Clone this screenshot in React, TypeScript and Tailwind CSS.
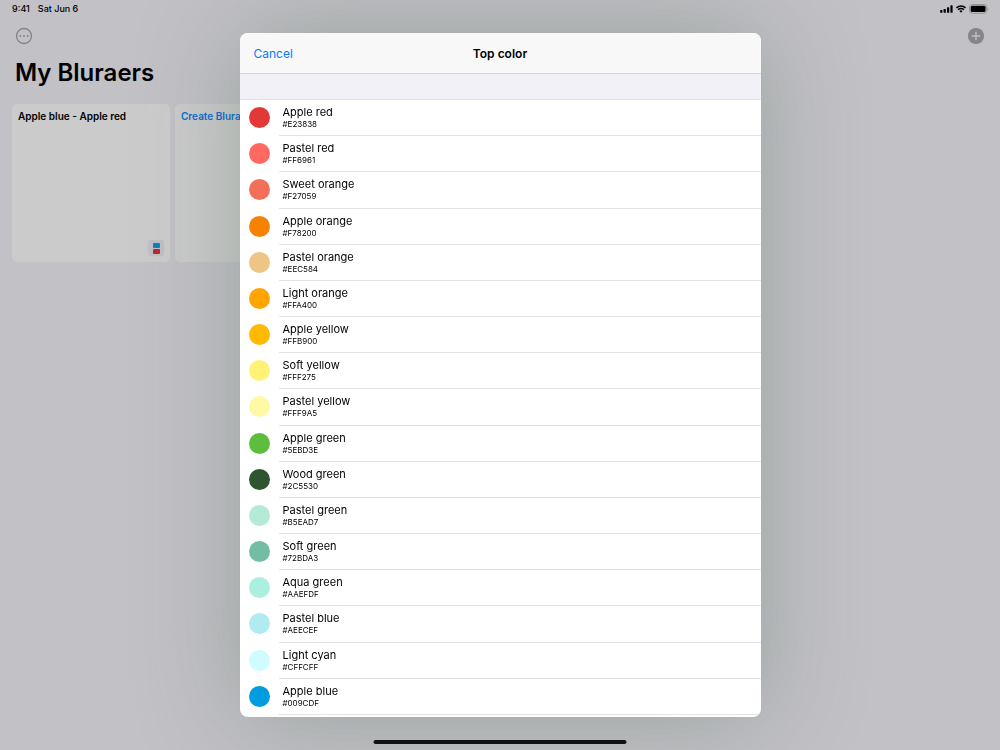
import type { ReactNode } from 'react';

type Swatch = {
  name: string;
  hex: string;
};

const SWATCHES: Swatch[] = [
  { name: 'Apple red', hex: '#E23838' },
  { name: 'Pastel red', hex: '#FF6961' },
  { name: 'Sweet orange', hex: '#F27059' },
  { name: 'Apple orange', hex: '#F78200' },
  { name: 'Pastel orange', hex: '#EEC584' },
  { name: 'Light orange', hex: '#FFA400' },
  { name: 'Apple yellow', hex: '#FFB900' },
  { name: 'Soft yellow', hex: '#FFF275' },
  { name: 'Pastel yellow', hex: '#FFF9A5' },
  { name: 'Apple green', hex: '#5EBD3E' },
  { name: 'Wood green', hex: '#2C5530' },
  { name: 'Pastel green', hex: '#B5EAD7' },
  { name: 'Soft green', hex: '#72BDA3' },
  { name: 'Aqua green', hex: '#AAEFDF' },
  { name: 'Pastel blue', hex: '#AEECEF' },
  { name: 'Light cyan', hex: '#CFFCFF' },
  { name: 'Apple blue', hex: '#009CDF' },
];

function SignalIcon() {
  return (
    <svg width="13" height="8" viewBox="0 0 13 8" aria-hidden="true">
      <rect x="0.2" y="5" width="2.2" height="2.8" rx="0.6" />
      <rect x="3.6" y="3.9" width="2.2" height="3.9" rx="0.6" />
      <rect x="7" y="2.2" width="2.2" height="5.6" rx="0.6" />
      <rect x="10.4" y="0.2" width="2.2" height="7.6" rx="0.6" />
    </svg>
  );
}

function WifiIcon() {
  return (
    <svg width="10" height="8" viewBox="0 0 10 8" fill="none" stroke="currentColor" strokeWidth="1.5" aria-hidden="true">
      <path d="M0.5 2.9a6.3 6.3 0 0 1 9 0" />
      <path d="M2.1 4.7a4.1 4.1 0 0 1 5.8 0" />
      <path d="M5 7.8 3.4 6.1a2.2 2.2 0 0 1 3.2 0Z" fill="currentColor" stroke="none" />
    </svg>
  );
}

function BatteryIcon() {
  return (
    <svg width="20" height="10" viewBox="0 0 20 10" aria-hidden="true">
      <rect x="0.6" y="0.6" width="17" height="8.6" rx="2.5" fill="none" stroke="#909093" strokeWidth="1" />
      <rect x="1.7" y="1.7" width="14.8" height="6.4" rx="1.5" />
      <path d="M18.6 3.4v3c.6-.3 1-.9 1-1.5s-.4-1.2-1-1.5Z" fill="#909093" />
    </svg>
  );
}

function StatusBar() {
  return (
    <div className="flex h-[18px] items-center justify-between pr-[11px] pl-3 text-[9px] font-medium">
      <div className="flex gap-2">
        <span>9:41</span>
        <span>Sat Jun 6</span>
      </div>
      <div className="flex items-center gap-[3px]">
        <SignalIcon />
        <WifiIcon />
        <BatteryIcon />
      </div>
    </div>
  );
}

function Card({ children }: { children: ReactNode }) {
  return (
    <article className="flex h-[158px] w-[158px] flex-col justify-between rounded-[5px] bg-[#cbcbcb] px-[6px] pt-[5px] pb-[6px] text-[10px] leading-[15px] font-semibold">
      {children}
    </article>
  );
}

function Library() {
  return (
    <main>
      <div className="flex items-center justify-between px-[15px] pt-[9px]">
        <button type="button" aria-label="More options">
          <svg width="18" height="18" viewBox="0 0 18 18" fill="#858587">
            <circle cx="9" cy="9" r="7.5" fill="none" stroke="#858587" strokeWidth="1.3" />
            <circle cx="5.4" cy="9" r="1" />
            <circle cx="9" cy="9" r="1" />
            <circle cx="12.6" cy="9" r="1" />
          </svg>
        </button>
        <button type="button" aria-label="Add">
          <svg width="18" height="18" viewBox="0 0 18 18">
            <circle cx="9" cy="9" r="8.1" fill="#858587" />
            <path d="M9 5.2v7.6M5.2 9h7.6" stroke="#c2c1c6" strokeWidth="1.3" strokeLinecap="round" />
          </svg>
        </button>
      </div>
      <h1 className="px-[15px] pt-3 text-[24px] leading-8 font-semibold">My Bluraers</h1>
      <div className="flex flex-wrap gap-[5px] px-3 pt-[15px]">
        <Card>
          <h2>Apple blue - Apple red</h2>
          <span className="flex h-4 w-4 flex-col items-center justify-center gap-px self-end rounded-[3px] bg-[#c0bfc5]">
            <span className="h-[5px] w-[7px] rounded-[1px] bg-[#0a83b9]" />
            <span className="h-[5px] w-[7px] rounded-[1px] bg-[#ba2a2b]" />
          </span>
        </Card>
        <Card>
          <button type="button" className="text-left text-[#0a6cd0]">
            Create Bluraer
          </button>
        </Card>
      </div>
    </main>
  );
}

function SwatchRow({ swatch }: { swatch: Swatch }) {
  return (
    <li className="flex min-h-9 flex-1">
      <button type="button" className="flex w-full items-stretch pl-[9px] text-left">
        <span className="mb-px h-[21px] w-[21px] self-center rounded-full" style={{ backgroundColor: swatch.hex }} />
        <span className="ml-[9px] flex flex-1 flex-col justify-center border-b border-[#e3e3e5] pl-1">
          <span className="text-[11px] leading-[14px]">{swatch.name}</span>
          <span className="text-[8px] leading-[11px]">{swatch.hex}</span>
        </span>
      </button>
    </li>
  );
}

function ColorSheet() {
  return (
    <div className="fixed inset-0 flex justify-center pt-[33px] pb-[33px]">
      <section
        role="dialog"
        aria-labelledby="sheet-title"
        className="flex w-full max-w-[521px] flex-col overflow-hidden rounded-[8px] bg-white shadow-[0_0_100px_rgba(70,100,80,0.34)]"
      >
        <header className="grid h-[41px] shrink-0 grid-cols-3 items-center border-b border-[#d5d5d9] bg-[#f8f8f9] px-[14px] pt-px text-[12px]">
          <button type="button" className="justify-self-start text-[#087aff]">
            Cancel
          </button>
          <h2 id="sheet-title" className="text-center font-semibold">
            Top color
          </h2>
        </header>
        <div className="h-[26px] shrink-0 border-b border-[#e2e2e6] bg-[#f2f1f7]" />
        <ul className="flex flex-1 flex-col overflow-hidden pb-[2px]">
          {SWATCHES.map((swatch) => (
            <SwatchRow key={swatch.hex} swatch={swatch} />
          ))}
        </ul>
      </section>
      <div className="absolute bottom-[6px] left-1/2 h-1 w-[253px] -translate-x-1/2 rounded-full bg-[#111113]" />
    </div>
  );
}

export default function App() {
  return (
    <div className="min-h-screen overflow-hidden bg-[#c2c1c6] font-['Inter',sans-serif] text-black">
      <StatusBar />
      <Library />
      <ColorSheet />
    </div>
  );
}
